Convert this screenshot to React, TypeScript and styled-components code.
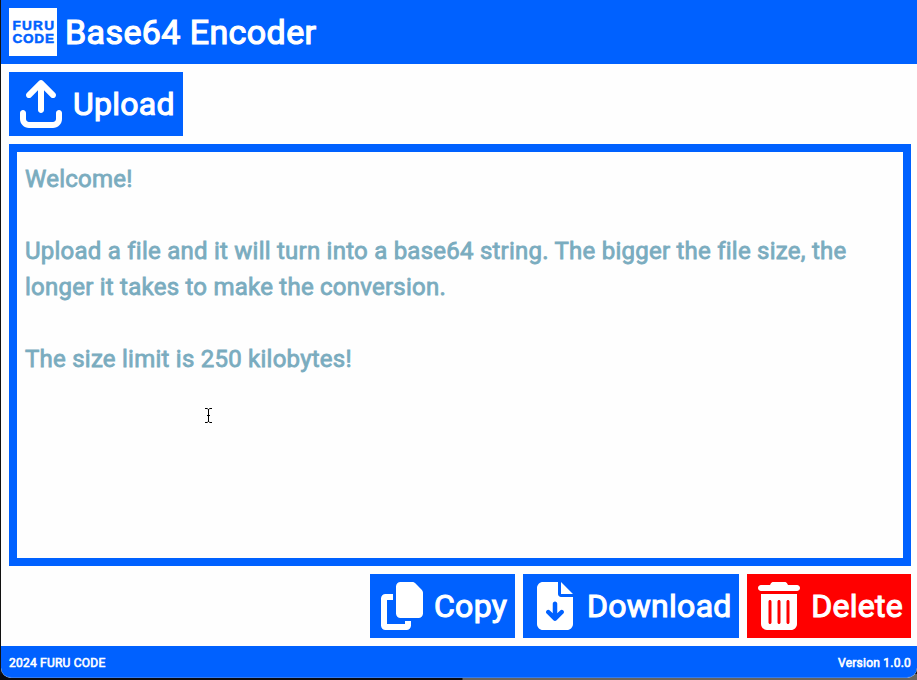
import React from "react";
import styled, { createGlobalStyle } from "styled-components";
import { FaArrowUpFromBracket, FaCopy, FaFileArrowDown, FaTrashCan } from "react-icons/fa6";

const GlobalStyle = createGlobalStyle`
  * { box-sizing: border-box; }
  html, body { margin: 0; height: 100%; overflow: hidden; background: #16181c; }
  body { font-family: Roboto, "Liberation Sans", sans-serif; }
`;

const Desktop = styled.div`
  height: 680px;
  padding: 0 0 2px 1px;
  background: linear-gradient(to right, #080a0e 462px, #66645f 463px) bottom / 100% 6px no-repeat, #111;
`;

const Window = styled.div`
  height: 678px;
  display: flex;
  flex-direction: column;
  background: #fefefe;
  border-radius: 0 0 10px 10px;
  overflow: hidden;
`;

const Header = styled.header`
  height: 64px;
  flex: none;
  display: flex;
  align-items: center;
  gap: 8px;
  padding: 0 8px;
  background: #0061ff;
  color: #fff;
`;

const Logo = styled.svg`
  display: block;
  width: 48px;
  height: 48px;
  background: #fff;
  fill: #0061ff;
  stroke: #0061ff;
  stroke-width: 0.5px;
  font: 700 13.6px "Liberation Sans", sans-serif;
`;

const Title = styled.h1`
  margin: 0;
  font-size: 34px;
  line-height: 48px;
  font-weight: 400;
  letter-spacing: 0.4px;
  -webkit-text-stroke: 1.2px currentColor;
  white-space: nowrap;
`;

const Content = styled.main`
  flex: 1;
  min-height: 0;
  display: flex;
  flex-direction: column;
  gap: 8px;
  padding: 8px 6px 8px 8px;
`;

const Actions = styled.div<{ $end?: boolean }>`
  display: flex;
  flex: none;
  justify-content: ${(p) => (p.$end ? "flex-end" : "flex-start")};
  gap: 8px;
`;

const Button = styled.button<{ $danger?: boolean; $width: number }>`
  width: ${(p) => p.$width}px;
  height: 64px;
  display: flex;
  align-items: center;
  gap: 8px;
  padding: 0 8px;
  border: 0;
  background: ${(p) => (p.$danger ? "#ff0000" : "#0061ff")};
  color: #fff;
  font: 400 32px/48px Roboto, "Liberation Sans", sans-serif;
  letter-spacing: 0.27px;
  white-space: nowrap;

  svg {
    width: 48px;
    height: 48px;
    flex: none;
  }
`;

const Label = styled.span`
  -webkit-text-stroke: 1.1px currentColor;
`;

const Output = styled.section`
  position: relative;
  flex: 1;
  min-height: 0;
  padding: 9px 8px 7px;
  border: 8px solid #0061ff;
  background: #fefefe;
  color: #7aacbf;
  font-size: 24px;
  line-height: 36px;
  font-weight: 400;
  letter-spacing: 0.24px;
  -webkit-text-stroke: 0.8px currentColor;
  white-space: pre-wrap;
`;

const Pointer = styled.svg`
  position: absolute;
  left: 187px;
  top: 255px;
  width: 9px;
  height: 17px;
  fill: none;
  stroke: #000;
`;

const Footer = styled.footer`
  height: 32px;
  flex: none;
  display: flex;
  align-items: center;
  justify-content: space-between;
  padding: 3px 6px 0 8px;
  background: #0061ff;
  border-bottom: 1px solid #347cf0;
  border-radius: 0 0 10px 10px;
  color: #fff;
  font-size: 12px;
  font-weight: 400;
  letter-spacing: 0.23px;
  -webkit-text-stroke: 0.6px currentColor;
`;

const message = `Welcome!

Upload a file and it will turn into a base64 string. The bigger the file size, the longer it takes to make the conversion.

The size limit is 250 kilobytes!`;

export default function App() {
  return (
    <>
      <GlobalStyle />
      <Desktop>
        <Window>
          <Header>
            <Logo viewBox="0 0 48 48">
              <text x="3.5" y="22.2" textLength="41.5" lengthAdjust="spacing">FURU</text>
              <text x="3.5" y="35.4" textLength="41.5" lengthAdjust="spacing">CODE</text>
            </Logo>
            <Title>Base64 Encoder</Title>
          </Header>
          <Content>
            <Actions>
              <Button $width={173.7}><FaArrowUpFromBracket /><Label>Upload</Label></Button>
            </Actions>
            <Output>
              {message}
              <Pointer viewBox="0 0 9 17">
                <path d="M1 1.5h2.2l1.3 1 1.3-1H8M1 15.5h2.2l1.3-1 1.3 1H8M4.5 2v13M3 8.5h3" />
              </Pointer>
            </Output>
            <Actions $end>
              <Button $width={145}><FaCopy /><Label>Copy</Label></Button>
              <Button $width={216.3}><FaFileArrowDown /><Label>Download</Label></Button>
              <Button $width={163.7} $danger><FaTrashCan /><Label>Delete</Label></Button>
            </Actions>
          </Content>
          <Footer>
            <span>2024 FURU CODE</span>
            <span>Version 1.0.0</span>
          </Footer>
        </Window>
      </Desktop>
    </>
  );
}
